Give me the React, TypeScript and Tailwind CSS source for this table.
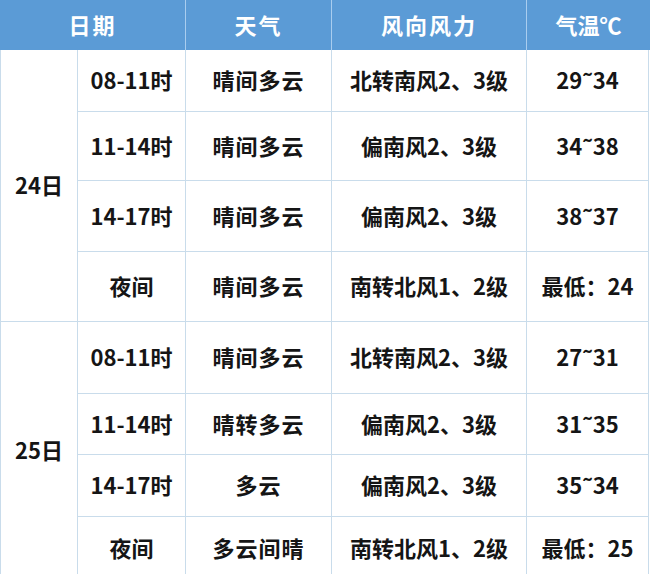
import React from "react";

type Row = { time: string; weather: string; wind: string; temp: string; h: string };

const g1: Row[] = [
  { time: "08-11时", weather: "晴间多云", wind: "北转南风2、3级", temp: "29˜34", h: "h-[62px]" },
  { time: "11-14时", weather: "晴间多云", wind: "偏南风2、3级", temp: "34˜38", h: "h-[69px]" },
  { time: "14-17时", weather: "晴间多云", wind: "偏南风2、3级", temp: "38˜37", h: "h-[71px]" },
  { time: "夜间", weather: "晴间多云", wind: "南转北风1、2级", temp: "最低：24", h: "h-[69px]" },
];
const g2: Row[] = [
  { time: "08-11时", weather: "晴间多云", wind: "北转南风2、3级", temp: "27˜31", h: "h-[72px]" },
  { time: "11-14时", weather: "晴转多云", wind: "偏南风2、3级", temp: "31˜35", h: "h-[61px]" },
  { time: "14-17时", weather: "多云", wind: "偏南风2、3级", temp: "35˜34", h: "h-[62px]" },
  { time: "夜间", weather: "多云间晴", wind: "南转北风1、2级", temp: "最低：25", h: "h-[62px]" },
];

function Group({ day, rows, last }: { day: string; rows: Row[]; last?: boolean }) {
  return (
    <div className={"flex " + (last ? "" : "border-b border-[#c9dceb]")}>
      <div className="w-[77px] shrink-0 border-r border-[#c9dceb] flex items-center justify-center pb-[3px]">
        <span>{day}</span>
      </div>
      <div className="flex flex-col">
        {rows.map((r, i) => (
          <div
            key={i}
            className={
              "grid grid-cols-[108px_146px_195px_121px] " +
              r.h +
              (i < rows.length - 1 ? " border-b border-[#c9dceb]" : "")
            }
          >
            <div className="border-r border-[#c9dceb] flex items-center justify-center pb-[3px]">{r.time}</div>
            <div className="border-r border-[#c9dceb] flex items-center justify-center pb-[3px] tracking-[1px]">{r.weather}</div>
            <div className="border-r border-[#c9dceb] flex items-center justify-center pb-[3px]">{r.wind}</div>
            <div className="flex items-center justify-center pb-[3px]">{r.temp}</div>
          </div>
        ))}
      </div>
    </div>
  );
}

export default function App() {
  return (
    <div
      className="w-[650px] h-[574px] overflow-hidden bg-white text-[22px] font-bold text-[#151515] leading-none"
      style={{ fontFamily: '"Noto Sans CJK SC", "Noto Sans", sans-serif' }}
    >
      <div className="grid grid-cols-[186px_146px_195px_123px] h-[50px] bg-[#5b9bd6] text-white">
        <div className="border-r border-[#a9cdef] flex items-center justify-center pb-[3px] tracking-[2px]">日期</div>
        <div className="border-r border-[#a9cdef] flex items-center justify-center pb-[3px] tracking-[2px]">天气</div>
        <div className="border-r border-[#a9cdef] flex items-center justify-center pb-[3px] tracking-[2px]">风向风力</div>
        <div className="flex items-center justify-center pb-[3px]">气温℃</div>
      </div>
      <div className="w-[649px] border-l border-r border-[#c9dceb]">
        <Group day="24日" rows={g1} />
        <Group day="25日" rows={g2} last />
      </div>
    </div>
  );
}
